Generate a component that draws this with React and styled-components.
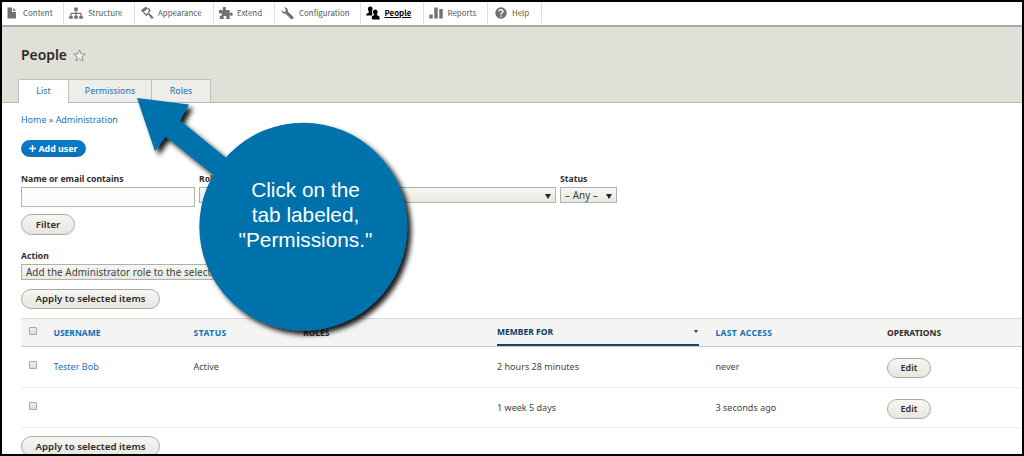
import styled, { createGlobalStyle } from "styled-components";

const GlobalStyle = createGlobalStyle`
  * {
    box-sizing: border-box;
  }
  body {
    margin: 0;
    overflow: hidden;
    font-family: "Noto Sans", "Open Sans", sans-serif;
    font-size: 9px;
    color: #444;
  }
  button, input {
    font-family: inherit;
  }
`;

const Frame = styled.div`
  position: relative;
  width: 1024px;
  height: 456px;
  border: 2px solid #000;
  background: #fff;
  overflow: hidden;
`;

//admin toolbar
const Toolbar = styled.nav`
  display: flex;
  height: 25px;
  background: #fff;
  border-bottom: 2px solid #a9a9a5;
`;

const ToolbarItem = styled.a`
  display: flex;
  align-items: center;
  flex: none;
  width: ${(p) => p.$width}px;
  height: 22px;
  padding-left: ${(p) => p.$pad || 5}px;
  gap: ${(p) => p.$gap}px;
  border-right: 1px solid #ddd;
  color: ${(p) => (p.$active ? "#000" : "#565656")};
  font-family: "Noto Sans CJK SC", "Noto Sans", sans-serif;
  font-size: 7.9px;
  line-height: 22px;
  font-weight: ${(p) => (p.$active ? 700 : 400)};
  text-decoration: ${(p) => (p.$active ? "underline" : "none")};

  svg {
    flex: none;
    fill: ${(p) => (p.$active ? "#000" : "#717171")};
  }
`;

//page header
const Header = styled.header`
  height: 76px;
  padding: 19px 0 0 16px;
  background: #e0e0d8;
  border-bottom: 1px solid #b9b9b3;
`;

const TitleRow = styled.div`
  display: flex;
  align-items: center;
  height: 18px;
  padding-left: 3px;
  gap: 6px;
`;

const Title = styled.h1`
  margin: 0;
  font-size: 13.9px;
  line-height: 18px;
  font-weight: 600;
  color: #2a2a2a;
`;

const Tabs = styled.div`
  display: flex;
  height: 24px;
  margin-top: 15px;
`;

const Tab = styled.a`
  width: ${(p) => p.$width}px;
  height: ${(p) => (p.$active ? 24 : 23)}px;
  border: 1px solid #c1c1bb;
  border-left-width: ${(p) => (p.$active ? 1 : 0)}px;
  border-bottom: 0;
  border-radius: ${(p) => (p.$active ? "2px 0 0 0" : "0")};
  background: ${(p) => (p.$active ? "#fff" : "#ededea")};
  color: #1f6fae;
  font-size: 8.85px;
  line-height: 22px;
  text-align: center;
`;

//page content
const Content = styled.main`
  padding: 10px 0 0 19px;
`;

const Breadcrumb = styled.div`
  height: 13px;
  line-height: 13px;
  font-size: 8.95px;
  color: #666;
`;

const Link = styled.a`
  color: #1a74b8;
`;

const AddButton = styled.button`
  display: flex;
  align-items: center;
  justify-content: center;
  gap: 2px;
  width: 65px;
  height: 17px;
  margin-top: 14px;
  padding: 0;
  border: 1px solid #1a6daa;
  border-radius: 9px;
  background: linear-gradient(#087ccb, #0a70b8);
  color: #fff;
  font-size: 8.9px;
  line-height: 15px;
  font-weight: 700;
`;

const PillButton = styled.button`
  display: block;
  width: ${(p) => p.$width}px;
  height: ${(p) => p.$height || 21}px;
  padding: 0;
  border: 1px solid #a9a9a6;
  border-radius: 11px;
  background: linear-gradient(#f6f6f3, #e7e7df);
  color: #2c2c2c;
  font-size: ${(p) => p.$size || 9.7}px;
  line-height: 18px;
  font-weight: 600;
`;

const Filters = styled.div`
  display: flex;
  gap: 4px;
  height: 36px;
  margin-top: 15px;
  margin-bottom: 6px;
`;

const Field = styled.label`
  display: flex;
  flex-direction: column;
  width: ${(p) => p.$width}px;
`;

const Label = styled.span`
  height: 15px;
  line-height: 14px;
  font-size: 8.65px;
  font-weight: 700;
  color: #2f2f2f;
  white-space: nowrap;
`;

const TextInput = styled.input`
  width: 100%;
  height: 20px;
  border: 1px solid #b4b4b0;
  background: #fcfcfa;
`;

const SelectBox = styled.span`
  display: flex;
  align-items: center;
  justify-content: space-between;
  height: 16px;
  padding: 0 4px;
  border: 1px solid #b0b0ac;
  background: linear-gradient(#f6f6f3, #e9e9e2);
  color: #3c3c3c;
  font-size: 9.9px;
  line-height: 14px;
  letter-spacing: 0.06px;
  white-space: nowrap;
`;

const Caret = styled.span`
  border: 3px solid transparent;
  border-top: 5px solid #222;
  border-bottom: 0;
  margin-top: 2px;
`;

const ActionArea = styled.div`
  display: flex;
  flex-direction: column;
  height: 60px;
  margin-top: 14px;
  margin-bottom: 9px;
`;

const ActionGap = styled.div`
  height: 9px;
`;

const Grid = styled.div`
  display: grid;
  grid-template-columns: 32.5px 140px 109.5px 194px 202px 16.5px 171.5px 1fr;
`;

const HeadRow = styled(Grid)`
  height: 29px;
  border-top: 1px solid #d9d9d5;
  border-bottom: 1px solid #c9c9c5;
  background: #f4f4f2;
  font-size: 8.5px;
  line-height: 27px;
  font-weight: 700;
  color: #2c2c2c;
`;

const BodyRow = styled(Grid)`
  height: ${(p) => p.$height}px;
  border-bottom: 1px solid #ececea;
  font-size: 9.05px;
  line-height: 39px;
`;

const SortHead = styled.span`
  color: ${(p) => (p.$active ? "#0b3d66" : "#0d70b8")};
  letter-spacing: ${(p) => p.$spacing || 0}px;
`;

const ActiveHead = styled(SortHead)`
  display: flex;
  align-items: center;
  justify-content: space-between;
  border-bottom: 2px solid #0f4672;
  height: 27px;
`;

const SortCaret = styled.span`
  border: 2.5px solid transparent;
  border-top: 3px solid #0b3d66;
  border-bottom: 0;
  margin-right: 1px;
`;

const CheckCell = styled.span`
  display: flex;
  align-items: flex-start;
  padding: ${(p) => p.$top}px 0 0 8px;
`;

const Check = styled.span`
  width: 8px;
  height: 8px;
  border: 1px solid #a8a8a8;
  border-radius: 1px;
  background: linear-gradient(#efefef, #dcdcdc);
`;

const ButtonCell = styled.span`
  padding-top: 11px;
`;

const BottomAction = styled.div`
  padding-top: 8px;
`;

//callout lies over the page
const Callout = styled.div`
  position: absolute;
  left: 118px;
  top: 78px;
  width: 320px;
  height: 280px;
`;

const CalloutText = styled.p`
  position: absolute;
  left: 85px;
  top: 97px;
  width: 201px;
  margin: 0;
  color: #fff;
  font-family: "Liberation Sans", Arial, sans-serif;
  font-size: 20.8px;
  line-height: 25px;
  text-align: center;
`;

const ContentIcon = () => (
  <svg width="10" height="12" viewBox="0 0 10 12">
    <path d="M0.5 0.5H5V5H9V11.5H0.5ZM6 0.8L8.8 4H6Z" />
  </svg>
);

const StructureIcon = () => (
  <svg width="14" height="12" viewBox="0 0 14 12">
    <path d="M5.200 .5h3.600v3.300H7.600v1.900h4.900v3H13.800V11.800h-3.500V8.700h1.100V6.900H7.600v1.800h1.200V11.800H5.200V8.700h1.200V6.900H2.600v1.800h1.100V11.800H.2V8.700h1.300V5.700h4.900V3.800H5.200Z" />
  </svg>
);

const AppearanceIcon = () => (
  <svg width="14" height="14" viewBox="0 0 14 14">
    <path d="M.8 4.600 5.600 .8 7.900 2.200 3.200 6.600Z" />
    <path d="M7.900 2.300 10 4.600 6.500 9.300 3.500 6.600" style={{ fill: "none" }} stroke="#717171" strokeWidth="1.300" />
    <path d="M8.100 8.600 9.600 7.300 13.500 11.600 12 13.200Z" />
  </svg>
);

const ExtendIcon = () => (
  <svg width="14" height="12" viewBox="0 0 14 12">
    <path d="M0 3h3.700C4.700 2 3.600 1.700 3.600 1c0-1.200 3.600-1.200 3.600 0 0 .7-1.100 1-.1 2h3.500v3c.9.800 1.100-.4 2-.4 1.500 0 1.500 3.400 0 3.400-.9 0-1.100-1.100-2-.4V12H7.300c-.8-1 .3-1.200.3-2.100 0-1.200-3.200-1.200-3.200 0 0 .9 1 1.100.3 2.100H.8V8.800C1.800 9 3 8.700 3 7.500S1.500 5.800 0 6.400Z" />
  </svg>
);

const WrenchIcon = () => (
  <svg width="13" height="13" viewBox="0 0 13 13">
    <path d="M3 .7C5.200 0 7.500 2 6.900 4.400L12.200 9.700c1.200 1.300-1 3.500-2.300 2.200L4.700 6.700C2.500 7.300.2 5.300.6 3L2.600 5 4.600 4.600 5 2.600Z" />
  </svg>
);

const PeopleIcon = () => (
  <svg width="14" height="14" viewBox="0 0 14 14">
    <path d="M2 3.200C1.700-.100 6.700-.300 6.600 3c0 1.200-.7 1.600-.7 2.700L6.400 7 6 9.500H.3C.2 7.800.8 7.300 2.700 6.700 3.300 6 2.100 5.300 2 3.200Z" />
    <path d="M7 6.200C6.700 2.700 11.900 2.500 11.600 6.200c-.1 1.500-.9 1.900-.7 3.100 2.500.7 2.900 1.300 2.800 4.200H6.800L5.500 12.200 6 10l2.200-.8c.2-1-1.100-1.500-1.200-3Z" />
  </svg>
);

const ReportsIcon = () => (
  <svg width="14" height="12" viewBox="0 0 14 12">
    <path d="M.3 7.500h3.500v4H.3ZM5.300.5h3.400v11H5.300ZM10.300 2h3.400v9.500h-3.400Z" />
  </svg>
);

const HelpIcon = () => (
  <svg width="12" height="12" viewBox="0 0 12 12">
    <circle cx="6" cy="6" r="5.700" />
    <path d="M4 4.600C4 2.200 8 2.200 8 4.500 8 5.900 6 5.700 6 7.500M6 8.400V9.800" style={{ fill: "none" }} stroke="#fff" strokeWidth="1.400" />
  </svg>
);

const StarIcon = () => (
  <svg width="13" height="13" viewBox="0 0 13 13">
    <path d="M6.500.8 8.100 4.800 12.300 5 9 7.800 10.100 12 6.500 9.600 2.900 12 4 7.800.7 5 4.900 4.800Z" fill="#eeeeea" stroke="#8c8c85" strokeWidth=".9" />
  </svg>
);

const toolbarItems = [
  { label: "Content", Icon: ContentIcon, width: 62, gap: 6 },
  { label: "Structure", Icon: StructureIcon, width: 71, gap: 5 },
  { label: "Appearance", Icon: AppearanceIcon, width: 79, gap: 4 },
  { label: "Extend", Icon: ExtendIcon, width: 61, gap: 4 },
  { label: "Configuration", Icon: WrenchIcon, width: 86, gap: 5, pad: 6 },
  { label: "People", Icon: PeopleIcon, width: 63, gap: 4.5, active: true },
  { label: "Reports", Icon: ReportsIcon, width: 64, gap: 4.5 },
  { label: "Help", Icon: HelpIcon, width: 54, gap: 5, pad: 7 },
];

const users = [
  { name: "Tester Bob", status: "Active", member: "2 hours 28 minutes", access: "never", height: 41 },
  { name: "", status: "", member: "1 week 5 days", access: "3 seconds ago", height: 40 },
];

const App = () => {
  return (
    <>
      <GlobalStyle />
      <Frame>
        <Toolbar>
          {toolbarItems.map(({ label, Icon, width, gap, pad, active }) => (
            <ToolbarItem key={label} $width={width} $gap={gap} $pad={pad} $active={active}>
              <Icon />
              {label}
            </ToolbarItem>
          ))}
        </Toolbar>
        <Header>
          <TitleRow>
            <Title>People</Title>
            <StarIcon />
          </TitleRow>
          <Tabs>
            <Tab $width={51} $active>List</Tab>
            <Tab $width={83}>Permissions</Tab>
            <Tab $width={59}>Roles</Tab>
          </Tabs>
        </Header>
        <Content>
          <Breadcrumb>
            <Link>Home</Link> » <Link>Administration</Link>
          </Breadcrumb>
          <AddButton>
            <svg width="7" height="7" viewBox="0 0 7 7">
              <path d="M3.500 0V7M0 3.500H7" stroke="#fff" strokeWidth="1.500" />
            </svg>
            Add user
          </AddButton>
          <Filters>
            <Field $width={174}>
              <Label>Name or email contains</Label>
              <TextInput />
            </Field>
            <Field $width={357}>
              <Label>Role</Label>
              <SelectBox>
                <span />
                <Caret />
              </SelectBox>
            </Field>
            <Field $width={57}>
              <Label>Status</Label>
              <SelectBox>
                – Any –
                <Caret />
              </SelectBox>
            </Field>
          </Filters>
          <PillButton $width={54}>Filter</PillButton>
          <ActionArea>
            <Field $width={240}>
              <Label>Action</Label>
              <SelectBox>Add the Administrator role to the selected</SelectBox>
            </Field>
            <ActionGap />
            <PillButton $width={139}>Apply to selected items</PillButton>
          </ActionArea>
          <HeadRow>
            <CheckCell $top={8}>
              <Check />
            </CheckCell>
            <SortHead>USERNAME</SortHead>
            <SortHead $spacing={0.5}>STATUS</SortHead>
            <span>ROLES</span>
            <ActiveHead $active>
              MEMBER FOR
              <SortCaret />
            </ActiveHead>
            <span />
            <SortHead $spacing={0.35}>LAST ACCESS</SortHead>
            <span>OPERATIONS</span>
          </HeadRow>
          {users.map((user) => (
            <BodyRow key={user.member} $height={user.height}>
              <CheckCell $top={14}>
                <Check />
              </CheckCell>
              <Link>{user.name}</Link>
              <span>{user.status}</span>
              <span />
              <span>{user.member}</span>
              <span />
              <span>{user.access}</span>
              <ButtonCell>
                <PillButton $width={44} $height={20} $size={9}>Edit</PillButton>
              </ButtonCell>
            </BodyRow>
          ))}
          <BottomAction>
            <PillButton $width={139}>Apply to selected items</PillButton>
          </BottomAction>
        </Content>
        <Callout>
          <svg width="320" height="280" viewBox="120 80 320 280">
            <defs>
              <filter id="calloutShadow" x="-10%" y="-10%" width="125%" height="125%">
                <feDropShadow dx="4" dy="4" stdDeviation="2.5" floodColor="#000" floodOpacity=".9" />
              </filter>
            </defs>
            <g fill="#0072ab" filter="url(#calloutShadow)">
              <path d="M137 98 189 104.500 180 120.500 240 169 226 185 165.500 136.500 155 151.500Z" />
              <circle cx="303.300" cy="226.700" r="104" />
            </g>
          </svg>
          <CalloutText>
            Click on the
            <br />
            tab labeled,
            <br />
            "Permissions."
          </CalloutText>
        </Callout>
      </Frame>
    </>
  );
};

export default App;
